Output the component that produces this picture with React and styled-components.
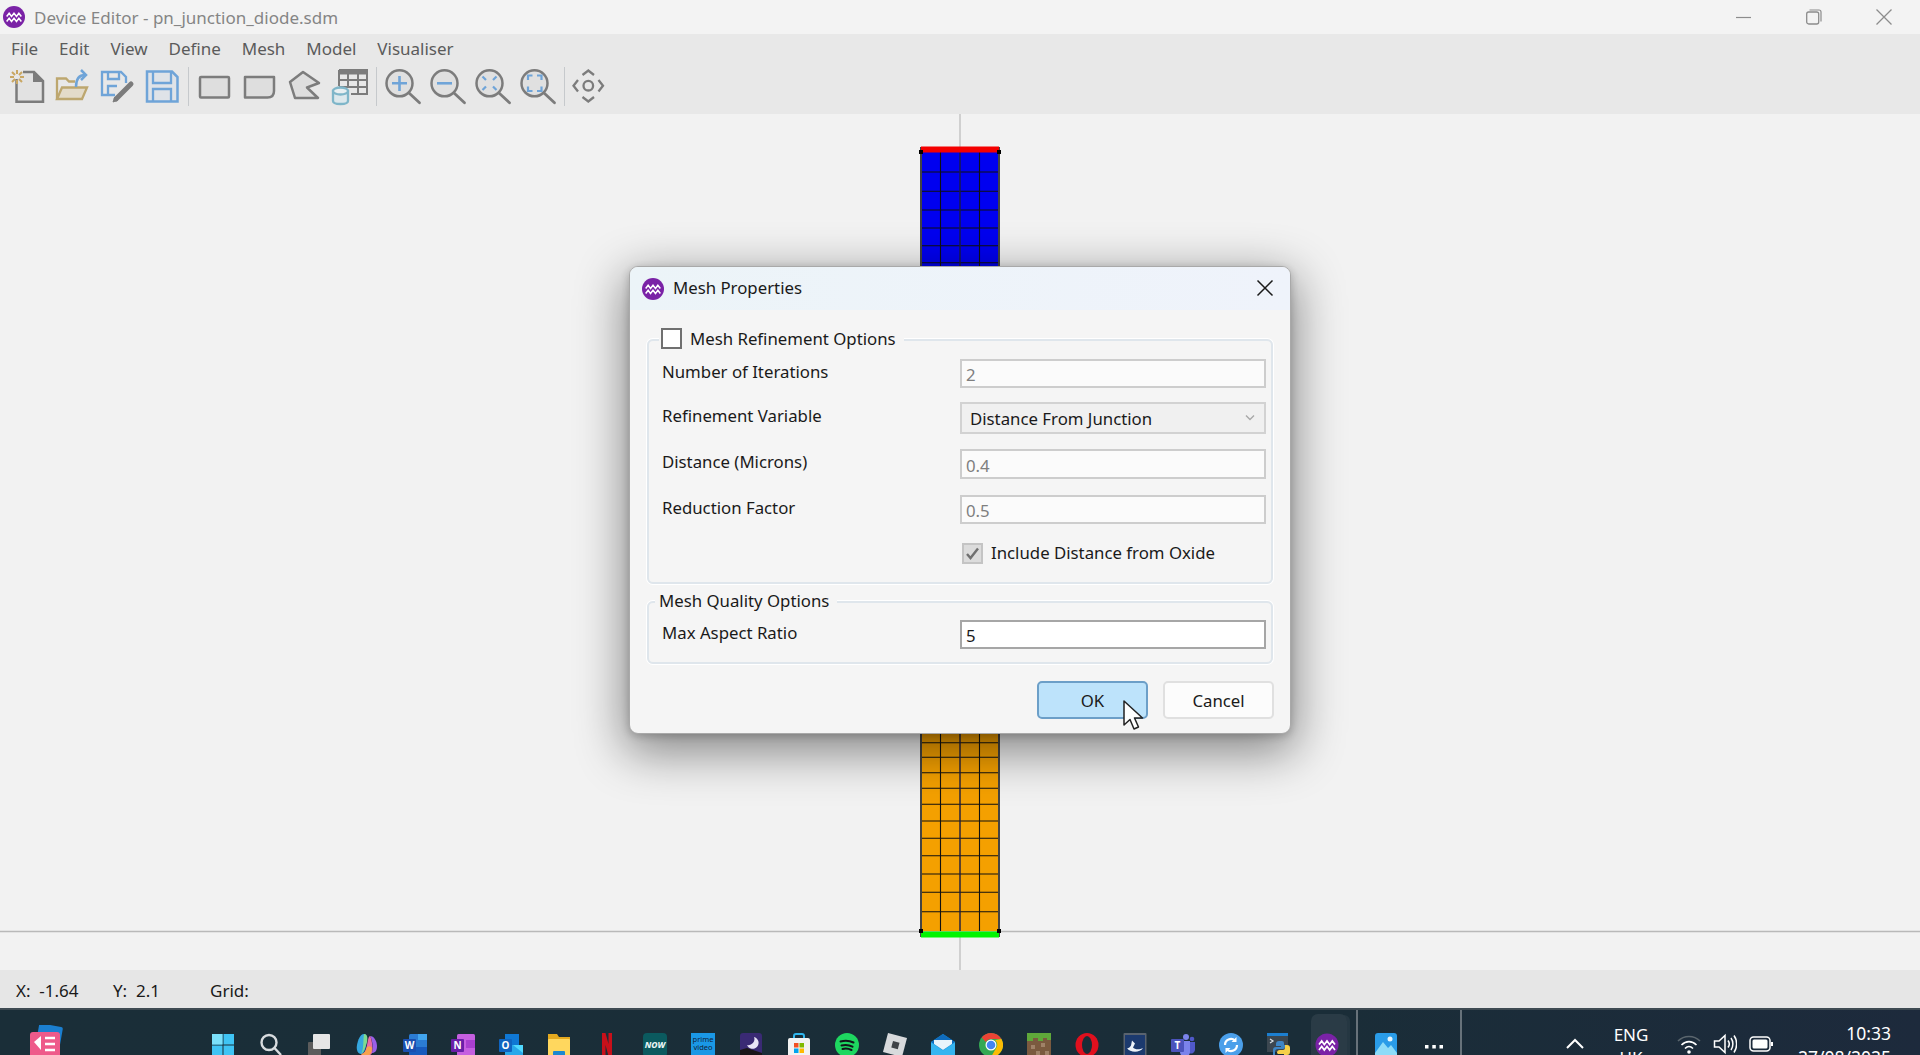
import styled, { createGlobalStyle } from 'styled-components';

const GlobalStyle = createGlobalStyle`
  html, body {
    margin: 0;
    padding: 0;
    height: 100%;
    overflow: hidden;
  }
  body {
    font-family: "Noto Sans", "Open Sans", sans-serif;
    color: #1a1a1a;
  }
`;

const Page = styled.div`
  display: flex;
  flex-direction: column;
  width: 1920px;
  height: 1055px;
  overflow: hidden;
`;

/* ---------- window chrome ---------- */

const TitleBar = styled.div`
  display: flex;
  align-items: center;
  flex: 0 0 34px;
  padding-left: 3px;
  background: #f3f3f3;
`;

const WindowTitle = styled.span`
  margin-left: 9px;
  font-size: 17px;
  color: #858585;
  white-space: nowrap;
`;

const WindowControls = styled.div`
  display: flex;
  margin-left: auto;
  padding-right: 1px;
`;

const ControlButton = styled.div`
  display: flex;
  align-items: center;
  justify-content: center;
  width: 70px;
  height: 34px;
`;

const MenuBar = styled.div`
  display: flex;
  align-items: center;
  flex: 0 0 28px;
  padding-left: 11px;
  gap: 20.9px;
  background: #e8e8e8;
  font-size: 17px;
  color: #5b5b5b;
`;

const Toolbar = styled.div`
  display: flex;
  flex: 0 0 52px;
  padding-left: 4px;
  background: #e8e8e8;
`;

const ToolButton = styled.svg`
  flex: 0 0 45px;
  width: 45px;
  height: 52px;
`;

const ToolSeparator = styled.div`
  flex: 0 0 1px;
  height: 39px;
  margin: 5px ${({ $right }) => $right}px 0 ${({ $left }) => $left}px;
  background: #c6c9cc;
`;

const Canvas = styled.div`
  position: relative;
  flex: 1;
  background: #f2f2f2;
  overflow: hidden;
`;

const MeshDrawing = styled.svg`
  position: absolute;
  inset: 0;
  width: 1920px;
  height: 856px;
`;

const StatusBar = styled.div`
  display: flex;
  align-items: center;
  flex: 0 0 38px;
  box-sizing: border-box;
  padding: 3px 0 0 16px;
  background: #e6e6e6;
  font-size: 17px;
  color: #1a1a1a;
`;

const StatusItem = styled.span`
  flex: 0 0 ${({ $width }) => $width}px;
  white-space: pre;
`;

/* ---------- dialog ---------- */

const Dialog = styled.div`
  position: absolute;
  top: 152px;
  left: 629px;
  display: flex;
  flex-direction: column;
  width: 662px;
  height: 468px;
  box-sizing: border-box;
  background: #f5f5f5;
  border: 1px solid #a9a9a9;
  border-radius: 9px;
  box-shadow: 0 14px 48px 5px rgba(0, 0, 0, 0.44), 0 2px 8px rgba(0, 0, 0, 0.2);
  font-size: 16.8px;
  color: #1a1a1a;
`;

const DialogHeader = styled.div`
  display: flex;
  align-items: center;
  flex: 0 0 43px;
  padding: 0 16px 0 12px;
  background: linear-gradient(90deg, #ecf4f8, #eff3fb);
  border-radius: 8px 8px 0 0;
`;

const DialogTitle = styled.span`
  margin-left: 9px;
  padding-bottom: 2px;
`;

const CloseButton = styled.svg`
  width: 18px;
  height: 18px;
  margin: 0 0 2px auto;
`;

const DialogBody = styled.div`
  display: flex;
  flex-direction: column;
  padding: 29px 17px 0 17px;
`;

const GroupBox = styled.div`
  position: relative;
  box-sizing: border-box;
  height: ${({ $height }) => $height}px;
  margin-bottom: 17px;
  padding: ${({ $top }) => $top}px 5px 0 13px;
  border: 2px solid #dfe6ec;
  border-radius: 6px;
  box-shadow: 0 0 0 1px #ffffff;
`;

const GroupLegend = styled.div`
  position: absolute;
  top: -15px;
  left: ${({ $left }) => $left}px;
  display: flex;
  align-items: center;
  gap: 8px;
  height: 24px;
  padding: 0 8px 0 ${({ $pad }) => $pad}px;
  background: #f5f5f5;
  white-space: nowrap;
`;

const FormRow = styled.div`
  display: grid;
  grid-template-columns: 298px 306px;
  align-items: center;
  height: ${({ $height }) => $height}px;
  margin-bottom: ${({ $gap }) => $gap}px;
`;

const FieldLabel = styled.span`
  padding-bottom: 5px;
`;

const TextField = styled.div`
  display: flex;
  align-items: center;
  box-sizing: border-box;
  height: 100%;
  padding: 2px 0 0 4px;
  background: ${({ $enabled }) => ($enabled ? '#ffffff' : '#fbfbfb')};
  border: 2px solid ${({ $enabled }) => ($enabled ? '#a6a6a6' : '#cdcdcd')};
  color: ${({ $enabled }) => ($enabled ? '#1a1a1a' : '#7f7f7f')};
`;

const SelectField = styled.div`
  display: flex;
  align-items: center;
  justify-content: space-between;
  box-sizing: border-box;
  height: 100%;
  padding: 0 9px 0 8px;
  background: #f0f0f0;
  border: 2px solid #d2d2d2;
`;

const CheckBox = styled.div`
  display: flex;
  align-items: center;
  justify-content: center;
  flex: 0 0 auto;
  box-sizing: border-box;
  width: 21px;
  height: 21px;
  background: ${({ $disabled }) => ($disabled ? '#dcdcdc' : '#ffffff')};
  border: 2px solid ${({ $disabled }) => ($disabled ? '#c4c4c4' : '#707070')};
`;

const CheckRow = styled.div`
  display: flex;
  align-items: center;
  gap: 8px;
  margin-left: 300px;
  height: 21px;
`;

const CheckText = styled.span`
  padding-bottom: 3px;
`;

const ButtonRow = styled.div`
  display: flex;
  justify-content: flex-end;
  gap: 15px;
  margin-right: -1px;
`;

const DialogButton = styled.div`
  display: flex;
  align-items: center;
  justify-content: center;
  box-sizing: border-box;
  width: 111px;
  height: 38px;
  background: ${({ $primary }) => ($primary ? '#bde3fb' : '#fcfcfc')};
  border: 2px solid ${({ $primary }) => ($primary ? '#6c9fc8' : '#e0e0e0')};
  border-radius: 5px;
`;

const Pointer = styled.svg`
  position: absolute;
  top: 433px;
  left: 493px;
  width: 22px;
  height: 32px;
`;

/* ---------- taskbar ---------- */

const Taskbar = styled.div`
  display: flex;
  align-items: flex-start;
  flex: 0 0 47px;
  box-sizing: border-box;
  height: 47px;
  overflow: hidden;
  background: linear-gradient(90deg, #1a2e38, #1a2d38 70%, #1d2a3c);
  border-top: 2px solid #3e4a52;
  color: #ffffff;
  font-size: 17px;
`;

const NotifyApp = styled.svg`
  flex: 0 0 38px;
  width: 38px;
  height: 32px;
  margin: 15px 134px 0 26.5px;
`;

const TaskSlot = styled.div`
  position: relative;
  display: flex;
  justify-content: center;
  flex: 0 0 48px;
  height: 45px;
  padding-top: 23px;
  box-sizing: border-box;

  ${({ $active }) =>
    $active &&
    `
    &::before {
      content: '';
      position: absolute;
      top: 4px;
      left: 8px;
      width: 36px;
      height: 50px;
      border-radius: 7px;
      background: rgba(255, 255, 255, 0.07);
      box-shadow: 4px 0 0 -1px rgba(255, 255, 255, 0.05);
    }
  `}
`;

const TaskIcon = styled.svg`
  position: relative;
  width: 24px;
  height: 24px;
`;

const TaskDivider = styled.div`
  flex: 0 0 2px;
  height: 45px;
  margin: 0 ${({ $right }) => $right}px 0 ${({ $left }) => $left}px;
  background: #67727a;
`;

const TrayIcon = styled.svg`
  flex: 0 0 24px;
  width: 24px;
  height: 24px;
  margin: 22px 0 0 ${({ $left }) => $left}px;
`;

const LangBlock = styled.div`
  flex: 0 0 50px;
  margin: 13px 0 0 19.5px;
  line-height: 23px;
  text-align: center;
`;

const Clock = styled.div`
  margin: 11px 29px 0 auto;
  font-size: 17.5px;
  line-height: 24px;
  text-align: right;
  white-space: nowrap;
`;

/* ---------- icons ---------- */

const GRAY = '#7c7c7c';
const BLUE = '#6fa4d8';

const AquariusMark = ({ size = 22 }) => (
  <svg width={size} height={size} viewBox="0 0 24 24" style={{ flex: 'none' }}>
    <circle cx="12" cy="12" r="12" fill="#7a22a6" />
    <path
      d="M4 11.500l2.700-3.500 2.600 3.500 2.700-3.500 2.700 3.500 2.600-3.500 2.700 3.500M4 17l2.700-3.500L9.300 17l2.700-3.500 2.700 3.500 2.600-3.500L20 17"
      fill="none"
      stroke="#fff"
      strokeWidth="1.700"
    />
  </svg>
);

const Magnifier = ({ dx = 0, children }) => (
  <ToolButton viewBox="0 0 45 52">
    <g transform={`translate(${dx} 0)`}>
      <circle cx="18.500" cy="21.300" r="13" fill="#e0e0e0" stroke={GRAY} strokeWidth="2.500" />
      <path d="M28 31l10.500 9.700" stroke={GRAY} strokeWidth="2.800" strokeLinecap="round" />
      {children}
    </g>
  </ToolButton>
);

const ToolIcons = {
  create: (
    <ToolButton viewBox="0 0 45 52">
      <path d="M12.500 17V39.700H39V19L30 10H19" fill="#e2e2e2" stroke={GRAY} strokeWidth="2.500" />
      <path d="M29 9.500V20H39.500Z" fill={GRAY} />
      <path
        d="M13 8v4M13 18v4M6 15h4M16 15h4M8 10l3 3M15 17l3 3M18 10l-3 3M11 17l-3 3"
        stroke="#c9a763"
        strokeWidth="2"
      />
    </ToolButton>
  ),
  open: (
    <ToolButton viewBox="0 0 45 52">
      <path d="M8 37V16.500H17l3 3H26" fill="none" stroke="#bda76f" strokeWidth="2.300" />
      <path d="M8 37L13 25.500H38L33 37Z" fill="#e3dbc9" stroke="#bda76f" strokeWidth="2.300" />
      <path d="M27 25C27 17 30 13 36 13" fill="none" stroke={BLUE} strokeWidth="2.500" />
      <path d="M32 8l5 5-5 5" fill="none" stroke={BLUE} strokeWidth="2.500" />
    </ToolButton>
  ),
  saveAs: (
    <ToolButton viewBox="0 0 45 52">
      <path
        d="M21 33H8V10H27L32 15V21M14 10V17H25V10M14 33V24H23"
        fill="none"
        stroke={BLUE}
        strokeWidth="2.300"
      />
      <path d="M37 22L22 37" stroke={GRAY} strokeWidth="5" strokeLinecap="round" />
      <path d="M21 35l-2 5 5-2Z" fill={GRAY} stroke={GRAY} />
    </ToolButton>
  ),
  save: (
    <ToolButton viewBox="0 0 45 52">
      <path d="M8 9.500H33L38.500 15V39.500H8Z" fill="#dfe3e8" stroke={BLUE} strokeWidth="2.500" />
      <path d="M14 10V21H32V10M14 39V27H32V39" fill="none" stroke={BLUE} strokeWidth="2.300" />
    </ToolButton>
  ),
  rect: (
    <ToolButton viewBox="0 0 45 52">
      <rect x="7" y="15" width="29" height="20.500" rx="1" fill="#dedede" stroke={GRAY} strokeWidth="2.500" />
    </ToolButton>
  ),
  rounded: (
    <ToolButton viewBox="0 0 45 52">
      <path d="M7 15H36V29Q36 35.500 29.500 35.500H7Z" fill="#dedede" stroke={GRAY} strokeWidth="2.500" strokeLinejoin="round" />
    </ToolButton>
  ),
  polygon: (
    <ToolButton viewBox="0 0 45 52">
      <path d="M20 10L36 21L24 25.500L35 36H12L7 20Z" fill="#dedede" stroke={GRAY} strokeWidth="2.500" strokeLinejoin="round" />
    </ToolButton>
  ),
  table: (
    <ToolButton viewBox="0 0 45 52">
      <path d="M11 8H39V32H23" fill="none" stroke={GRAY} strokeWidth="2" />
      <path d="M11 8H39V12.500H11Z" fill={GRAY} />
      <path d="M11 8V24M11 18H39M11 25H39M20 12V26M30 12V32" fill="none" stroke={GRAY} strokeWidth="2" />
      <path d="M5 29V39C5 43 20 43 20 39V29Z" fill="#dce8ec" stroke="#7fb6c9" strokeWidth="2.300" />
      <ellipse cx="12.500" cy="29" rx="7.500" ry="3.500" fill="#e8eff1" stroke="#7fb6c9" strokeWidth="2.300" />
    </ToolButton>
  ),
  zoomIn: (
    <Magnifier>
      <path d="M11 21.300h15M18.500 14v15" stroke={BLUE} strokeWidth="2.600" />
    </Magnifier>
  ),
  zoomOut: (
    <Magnifier>
      <path d="M11 21.300h15" stroke={BLUE} strokeWidth="2.600" />
    </Magnifier>
  ),
  fitIn: (
    <Magnifier>
      <path
        d="M11.500 14.500l3.500 3.500M25.500 14.500l-3.500 3.500M11.500 28l3.500-3.500M25.500 28l-3.500-3.500"
        stroke={BLUE}
        strokeWidth="2.200"
      />
    </Magnifier>
  ),
  fitOut: (
    <Magnifier>
      <path
        d="M12 18v-4.500h4.500M21 13.500h4.500V18M25.500 24.500V29H21M16.500 29H12v-4.500"
        fill="none"
        stroke={BLUE}
        strokeWidth="2.200"
      />
    </Magnifier>
  ),
  move: (
    <ToolButton viewBox="0 0 45 52">
      <circle cx="22.300" cy="23.700" r="4.800" fill="none" stroke={GRAY} strokeWidth="2.300" />
      <path
        d="M16.500 13l5.800-4.500L28 13M16.500 35l5.800 4.500L28 35M12 18l-4.500 5.700L12 29.500M32.500 18l4.500 5.700-4.500 5.800"
        fill="none"
        stroke={GRAY}
        strokeWidth="2.300"
      />
    </ToolButton>
  ),
};

const taskIcons = [
  <g key="start">
    <path d="M1 1h10.500v10.500H1zM12.500 1H23v10.500H12.500zM1 12.500h10.500V23H1zM12.500 12.500H23V23H12.500z" fill="#3fc4f4" />
    <path d="M1 1h10.500v10.500H1z" fill="#7be0fa" />
  </g>,
  <g key="search" fill="none" stroke="#d8dcdf" strokeWidth="2.400">
    <circle cx="10" cy="9.500" r="7.500" />
    <path d="M15.500 15l6.500 7" />
  </g>,
  <g key="view">
    <rect x="1" y="9" width="13" height="14" rx="1" fill="#5c5c5c" />
    <rect x="6" y="1" width="17" height="15" rx="1" fill="#e6e6e6" />
  </g>,
  <g key="copilot">
    <path d="M9 1C5 1 3 7 2 12c-1 5 1 9 4 9 3 0 4-4 5-8 1-4 2-12-2-12z" fill="#35a7df" />
    <path d="M9 1c3 0 4 3 3 8-1 3-3 10-6 12 3-3 2-15 3-20z" fill="#7edb8f" />
    <path d="M15 3c4 0 7 5 7 10s-2 7-5 7c1-5 1-12-2-17z" fill="#9b5fe8" />
    <path d="M15 3c2 3 3 12 2 17-1 2-3 3-6 3-2 0-4-1-5-2 4 0 5-5 6-9 1-4 1-8 3-9z" fill="#e96aa8" />
    <path d="M12 14c2-1 4-1 5 1 0 4-2 8-6 8-2 0-4-1-5-2 3 0 5-3 6-7z" fill="#f7a24c" />
  </g>,
  <g key="word">
    <rect x="6" y="1" width="18" height="23" rx="1.500" fill="#2b7cd3" />
    <rect x="15" y="1" width="9" height="6" fill="#41a5ee" />
    <rect x="6" y="14" width="18" height="10" fill="#185abd" />
    <rect x="0" y="6" width="13" height="13" rx="1" fill="#1a4fb0" />
    <text x="6.500" y="16" fontSize="10" fontWeight="700" fill="#fff" textAnchor="middle" fontFamily="Noto Sans">W</text>
  </g>,
  <g key="note">
    <rect x="6" y="1" width="18" height="23" rx="1.500" fill="#c55fe0" />
    <rect x="15" y="7" width="9" height="8" fill="#a93fd0" />
    <rect x="0" y="6" width="13" height="13" rx="1" fill="#6a1fa8" />
    <text x="6.500" y="16" fontSize="10" fontWeight="700" fill="#fff" textAnchor="middle" fontFamily="Noto Sans">N</text>
  </g>,
  <g key="outlook">
    <rect x="6" y="1" width="14" height="14" fill="#0f78d4" />
    <path d="M6 12h18v12H6z" fill="#28a8ea" />
    <path d="M14 12l10 8v-8z" fill="#50d9ff" />
    <rect x="0" y="6" width="13" height="13" rx="1" fill="#0f64c0" />
    <text x="6.500" y="16" fontSize="10" fontWeight="700" fill="#fff" textAnchor="middle" fontFamily="Noto Sans">O</text>
  </g>,
  <g key="files">
    <path d="M1 1h9l2 3h11v20H1z" fill="#e4a91f" />
    <rect x="1" y="6" width="22" height="18" rx="1" fill="#ffd75e" />
    <rect x="6" y="18" width="12" height="6" rx="1" fill="#1c88cf" />
  </g>,
  <path key="netflix" d="M7 0h3.500l3 11V0H17v24l-3.500-1L10.500 12v11L7 24z" fill="#c8101a" />,
  <g key="now">
    <rect x="0" y="0" width="24" height="24" rx="4" fill="#0b5a5f" />
    <text x="12" y="15" fontSize="8.500" fontWeight="800" fontStyle="italic" fill="#e8f4f4" textAnchor="middle" fontFamily="Noto Sans">NOW</text>
  </g>,
  <g key="prime">
    <rect x="0" y="0" width="24" height="24" fill="#1a98e6" />
    <text x="12" y="9" fontSize="7.500" fill="#10233a" textAnchor="middle" fontFamily="Noto Sans">prime</text>
    <text x="12" y="17" fontSize="7.500" fill="#10233a" textAnchor="middle" fontFamily="Noto Sans">video</text>
  </g>,
  <g key="moon">
    <rect x="1" y="0" width="22" height="24" rx="3" fill="#3a2a74" />
    <path d="M15 4a6 6 0 1 1-7 8 6 6 0 0 0 7-8z" fill="#e8e4f6" />
    <path d="M1 17l7-2 15 5v4H1z" fill="#1a1518" />
  </g>,
  <g key="store">
    <path d="M7 6V3a2 2 0 0 1 2-2h6a2 2 0 0 1 2 2v3" fill="none" stroke="#31b7ee" strokeWidth="2" />
    <rect x="1" y="5" width="22" height="19" rx="2" fill="#f2f2f2" />
    <rect x="7" y="10" width="4.500" height="4.500" fill="#f25022" />
    <rect x="12.500" y="10" width="4.500" height="4.500" fill="#7fba00" />
    <rect x="7" y="15.500" width="4.500" height="4.500" fill="#00a4ef" />
    <rect x="12.500" y="15.500" width="4.500" height="4.500" fill="#ffb900" />
  </g>,
  <g key="spotify">
    <circle cx="12" cy="12" r="12" fill="#1ed760" />
    <path d="M5.500 8.500c4-1.200 9-1 13 1M6.500 12.500c3.500-1 7.500-.7 11 1.200M7.500 16c3-.8 6-.5 9 1" fill="none" stroke="#12161a" strokeWidth="2" strokeLinecap="round" />
  </g>,
  <g key="roblox">
    <path d="M5 0l19 5-5 19L0 19z" fill="#d8dadc" />
    <path d="M10 8l6.500 1.700-1.700 6.500-6.500-1.700z" fill="#3f4347" />
  </g>,
  <g key="mail">
    <path d="M12 1L24 9v15H0V9z" fill="#1d9be0" />
    <path d="M0 9l12 8 12-8-12-8z" fill="#0f6cbd" />
    <path d="M3 7h18v4l-9 6-9-6z" fill="#e8f4fb" />
    <path d="M0 9.500l12 8 12-8V24H0z" fill="#35b5f0" />
  </g>,
  <g key="chrome">
    <circle cx="12" cy="12" r="12" fill="#34a853" />
    <path d="M12 0a12 12 0 0 1 10.400 6H12a6 6 0 0 0-5.200 3L2.700 4.500A12 12 0 0 1 12 0z" fill="#ea4335" />
    <path d="M22.400 6A12 12 0 0 1 12 24l5.200-9A6 6 0 0 0 16 7z" fill="#fbbc05" />
    <circle cx="12" cy="12" r="5.500" fill="#fff" />
    <circle cx="12" cy="12" r="4.300" fill="#4285f4" />
  </g>,
  <g key="mine">
    <rect x="0" y="0" width="24" height="24" fill="#7b5a3f" />
    <path d="M0 0h24v7h-4v-2h-4v3h-5V5H6v3H0z" fill="#5fa83a" />
    <path d="M4 12h4v4H4zM14 10h4v4h-4zM9 18h4v4H9zM18 18h4v4h-4z" fill="#a08268" />
  </g>,
  <g key="opera">
    <ellipse cx="12" cy="12" rx="11.500" ry="12" fill="#e0101e" />
    <ellipse cx="12" cy="12" rx="5" ry="9" fill="#1a2d38" />
  </g>,
  <g key="steam">
    <rect x="0.500" y="0" width="23" height="24" rx="1" fill="#59636e" />
    <rect x="2" y="2" width="20" height="20" fill="#1c3a6e" />
    <path d="M4 15c3 5 13 5 16 0-3 1.500-8 2-10-.5l2-4-3-3-1 5c-1 2-3 3-4 2.500z" fill="#eef3f8" />
  </g>,
  <g key="teams">
    <circle cx="15" cy="4" r="3" fill="#7b83eb" />
    <circle cx="21" cy="6" r="2.300" fill="#5059c9" />
    <path d="M16 9h8v8a4 4 0 0 1-6 3z" fill="#5059c9" />
    <path d="M6 8h13v11a5 5 0 0 1-10 0z" fill="#7b83eb" />
    <rect x="0" y="6" width="13" height="13" rx="1" fill="#4b53bc" />
    <text x="6.500" y="16" fontSize="10" fontWeight="700" fill="#fff" textAnchor="middle" fontFamily="Noto Sans">T</text>
  </g>,
  <g key="sync">
    <circle cx="12" cy="12" r="12" fill="#4b9fea" />
    <path d="M6 12a6 6 0 0 1 10-4.500M18 12a6 6 0 0 1-10 4.500" fill="none" stroke="#fff" strokeWidth="2.200" />
    <path d="M17.500 4v5h-5zM6.500 20v-5h5z" fill="#fff" />
  </g>,
  <g key="python">
    <rect x="0" y="0" width="21" height="19" fill="#3c4750" />
    <rect x="0" y="0" width="21" height="3" fill="#1c7fd0" />
    <path d="M3 6l3 2-3 2" fill="none" stroke="#d8e0e4" strokeWidth="1.300" />
    <path d="M8 24v-5a3 3 0 0 1 3-3h5a2 2 0 0 0 2-2v-2h-1V10a2 2 0 0 0-2-2h-3a3 3 0 0 0-3 3v2h5v1H9a3 3 0 0 0-3 3v4a3 3 0 0 0 2 3z" fill="#3d86c6" />
    <path d="M18 12h2a3 3 0 0 1 3 3v4a3 3 0 0 1-3 3h-3v2h-5v-1a2 2 0 0 1 0-1h5v-1h-6a2 2 0 0 1-1-2 3 3 0 0 1 3-2h3a2 2 0 0 0 2-2z" fill="#f5cf47" />
  </g>,
];

const PURPLE_ICON = (
  <g>
    <circle cx="12" cy="12" r="11.500" fill="#7a22a6" />
    <path
      d="M4 11.500l2.700-3.500 2.600 3.500 2.700-3.500 2.700 3.500 2.600-3.500 2.700 3.500M4 17l2.700-3.500L9.300 17l2.700-3.500 2.700 3.500 2.600-3.500L20 17"
      fill="none"
      stroke="#fff"
      strokeWidth="1.700"
    />
  </g>
);

const PHOTOS_ICON = (
  <g>
    <rect x="1" y="0" width="22" height="24" rx="3" fill="#2a9ce8" />
    <path d="M1 20l8-11 5 6 3-3 6 8v4H1z" fill="#8edcf8" />
    <circle cx="16" cy="6" r="2.500" fill="#e8f6fd" />
  </g>
);

const meshBlueRows = [172, 191.3, 210, 228, 245.7, 262.7];
const meshOrangeRows = [742.7, 757.3, 772.7, 788.3, 804.3, 821, 838.3, 855.7, 874, 892.3, 911.7];

const Mesh = () => (
  <MeshDrawing viewBox="0 114 1920 856">
    <path d="M960 114V970" stroke="#d0d0d0" strokeWidth="2" />
    <path d="M0 931.500H1920" stroke="#b9b9b9" strokeWidth="1.300" />
    <rect x="921" y="152" width="78" height="348" fill="#0000f0" />
    <rect x="921" y="500" width="78" height="431" fill="#f4a000" />
    {[...meshBlueRows, ...meshOrangeRows].map((y) => (
      <path key={y} d={`M921 ${y}H999`} stroke="#111" strokeWidth="1.100" />
    ))}
    <path d="M940.500 152V931M979.500 152V931" stroke="#111" strokeWidth="1.100" />
    <path d="M960 152V931" stroke="#1b1b40" strokeOpacity="0.7" strokeWidth="2" />
    <path d="M921 147V937M999 147V937" stroke="#444" strokeWidth="2" />
    <rect x="921" y="146.500" width="78" height="6" fill="#f40000" />
    <rect x="921" y="931.500" width="78" height="6" fill="#00f400" />
    {[
      [921, 152],
      [999, 152],
      [921, 931],
      [999, 931],
    ].map(([x, y]) => (
      <rect key={`${x}-${y}`} x={x - 2} y={y - 2} width="4" height="4" fill="#000" />
    ))}
  </MeshDrawing>
);

const menuItems = ['File', 'Edit', 'View', 'Define', 'Mesh', 'Model', 'Visualiser'];

const App = () => (
  <Page>
    <GlobalStyle />
    <TitleBar>
      <AquariusMark size={22} />
      <WindowTitle>Device Editor - pn_junction_diode.sdm</WindowTitle>
      <WindowControls>
        <ControlButton>
          <svg width="16" height="16" viewBox="0 0 16 16">
            <path d="M0 8.500H15" stroke="#8c8c8c" strokeWidth="1.200" />
          </svg>
        </ControlButton>
        <ControlButton>
          <svg width="16" height="16" viewBox="0 0 16 16">
            <rect x="0.700" y="3" width="12" height="12" rx="2" fill="none" stroke="#8c8c8c" strokeWidth="1.300" />
            <path d="M3.500 1H13a2 2 0 0 1 2 2v9.500" fill="none" stroke="#8c8c8c" strokeWidth="1.200" />
          </svg>
        </ControlButton>
        <ControlButton>
          <svg width="16" height="16" viewBox="0 0 16 16">
            <path d="M.5.500l15 15M15.500.500l-15 15" stroke="#8c8c8c" strokeWidth="1.300" />
          </svg>
        </ControlButton>
      </WindowControls>
    </TitleBar>

    <MenuBar>
      {menuItems.map((item) => (
        <span key={item}>{item}</span>
      ))}
    </MenuBar>

    <Toolbar>
      {ToolIcons.create}
      {ToolIcons.open}
      {ToolIcons.saveAs}
      {ToolIcons.save}
      <ToolSeparator $left={3.5} $right={4} />
      {ToolIcons.rect}
      {ToolIcons.rounded}
      {ToolIcons.polygon}
      {ToolIcons.table}
      <ToolSeparator $left={3} $right={4} />
      {ToolIcons.zoomIn}
      {ToolIcons.zoomOut}
      {ToolIcons.fitIn}
      {ToolIcons.fitOut}
      <ToolSeparator $left={3} $right={1.5} />
      {ToolIcons.move}
    </Toolbar>

    <Canvas>
      <Mesh />
      <Dialog>
        <DialogHeader>
          <AquariusMark size={22} />
          <DialogTitle>Mesh Properties</DialogTitle>
          <CloseButton viewBox="0 0 18 18">
            <path d="M1.500 1.500l15 15M16.500 1.500l-15 15" stroke="#1a1a1a" strokeWidth="1.500" />
          </CloseButton>
        </DialogHeader>

        <DialogBody>
          <GroupBox $height={245} $top={18}>
            <GroupLegend $left={10} $pad={2}>
              <CheckBox />
              <span>Mesh Refinement Options</span>
            </GroupLegend>
            <FormRow $height={29} $gap={14}>
              <FieldLabel>Number of Iterations</FieldLabel>
              <TextField>2</TextField>
            </FormRow>
            <FormRow $height={32} $gap={15}>
              <FieldLabel>Refinement Variable</FieldLabel>
              <SelectField>
                Distance From Junction
                <svg width="10" height="8" viewBox="0 0 10 8">
                  <path d="M1 1.500l4 4 4-4" fill="none" stroke="#a8a8a8" strokeWidth="1.400" />
                </svg>
              </SelectField>
            </FormRow>
            <FormRow $height={30} $gap={16}>
              <FieldLabel>Distance (Microns)</FieldLabel>
              <TextField>0.4</TextField>
            </FormRow>
            <FormRow $height={29} $gap={19}>
              <FieldLabel>Reduction Factor</FieldLabel>
              <TextField>0.5</TextField>
            </FormRow>
            <CheckRow>
              <CheckBox $disabled>
                <svg width="15" height="15" viewBox="0 0 15 15">
                  <path d="M2 8l3.500 4L13 2.500" fill="none" stroke="#707070" strokeWidth="2.400" />
                </svg>
              </CheckBox>
              <CheckText>Include Distance from Oxide</CheckText>
            </CheckRow>
          </GroupBox>

          <GroupBox $height={63} $top={17}>
            <GroupLegend $left={6} $pad={4}>
              <span>Mesh Quality Options</span>
            </GroupLegend>
            <FormRow $height={29} $gap={0}>
              <FieldLabel>Max Aspect Ratio</FieldLabel>
              <TextField $enabled>5</TextField>
            </FormRow>
          </GroupBox>

          <ButtonRow>
            <DialogButton $primary>OK</DialogButton>
            <DialogButton>Cancel</DialogButton>
          </ButtonRow>
        </DialogBody>

        <Pointer viewBox="0 0 22 32">
          <path
            d="M1 1V25L7 19.500L11 29L15.500 27L11.500 18H19.500Z"
            fill="#fff"
            stroke="#222"
            strokeWidth="1.500"
            strokeLinejoin="round"
          />
        </Pointer>
      </Dialog>
    </Canvas>

    <StatusBar>
      <StatusItem $width={97}>X:  -1.64</StatusItem>
      <StatusItem $width={97}>Y:  2.1</StatusItem>
      <StatusItem>Grid:</StatusItem>
    </StatusBar>

    <Taskbar>
      <NotifyApp viewBox="0 0 38 32">
        <rect x="10" y="0" width="24" height="26" rx="2" transform="rotate(10 22 13)" fill="#1b7fd0" />
        <rect x="3" y="7" width="30" height="27" rx="3" fill="#ee5a8a" />
        <path d="M7 17l7-6v14z" fill="#fff" />
        <path d="M18 13h10M18 19h10M18 25h10" stroke="#fff" strokeWidth="2.400" />
      </NotifyApp>
      {taskIcons.map((icon) => (
        <TaskSlot key={icon.key}>
          <TaskIcon viewBox="0 0 24 24">{icon}</TaskIcon>
        </TaskSlot>
      ))}
      <TaskSlot $active>
        <TaskIcon viewBox="0 0 24 24">{PURPLE_ICON}</TaskIcon>
      </TaskSlot>
      <TaskDivider $left={5} $right={4} />
      <TaskSlot>
        <TaskIcon viewBox="0 0 24 24">{PHOTOS_ICON}</TaskIcon>
      </TaskSlot>
      <TaskSlot>
        <TaskIcon viewBox="0 0 24 24">
          <path d="M3 12h3.500v3.500H3zM10.300 12h3.500v3.500h-3.500zM17.500 12H21v3.500h-3.500z" fill="#fff" />
        </TaskIcon>
      </TaskSlot>
      <TaskDivider $left={2} $right={0} />
      <TrayIcon $left={101} viewBox="0 0 24 24">
        <path d="M4 16l8-8 8 8" fill="none" stroke="#fff" strokeWidth="2" />
      </TrayIcon>
      <LangBlock>
        ENG
        <br />
        UK
      </LangBlock>
      <TrayIcon $left={20.5} viewBox="0 0 24 24">
        <path d="M1 9c6-6 16-6 22 0" fill="none" stroke="#5b666e" strokeWidth="1.600" />
        <path d="M4.500 13c4.500-4.500 10.500-4.500 15 0M8 16.500c2.500-2.500 5.500-2.500 8 0" fill="none" stroke="#fff" strokeWidth="1.600" />
        <circle cx="12" cy="20" r="1.800" fill="#fff" />
      </TrayIcon>
      <TrayIcon $left={12} viewBox="0 0 24 24">
        <path d="M1.500 9H6l6-5.500v17L6 15H1.500Z" fill="none" stroke="#fff" strokeWidth="1.500" />
        <path d="M15 8.500c1.500 2 1.500 5 0 7M18 6c2.500 3.500 2.500 8.500 0 12M21 3.500c3.500 5 3.500 12 0 17" fill="none" stroke="#fff" strokeWidth="1.500" />
      </TrayIcon>
      <TrayIcon $left={12} viewBox="0 0 24 24">
        <rect x="1" y="5" width="20" height="14" rx="3.500" fill="none" stroke="#fff" strokeWidth="1.500" />
        <rect x="3.500" y="7.500" width="15" height="9" rx="1.500" fill="#fff" />
        <rect x="22" y="10" width="2" height="4" fill="#fff" />
      </TrayIcon>
      <Clock>
        10:33
        <br />
        27/08/2025
      </Clock>
    </Taskbar>
  </Page>
);

export default App;
